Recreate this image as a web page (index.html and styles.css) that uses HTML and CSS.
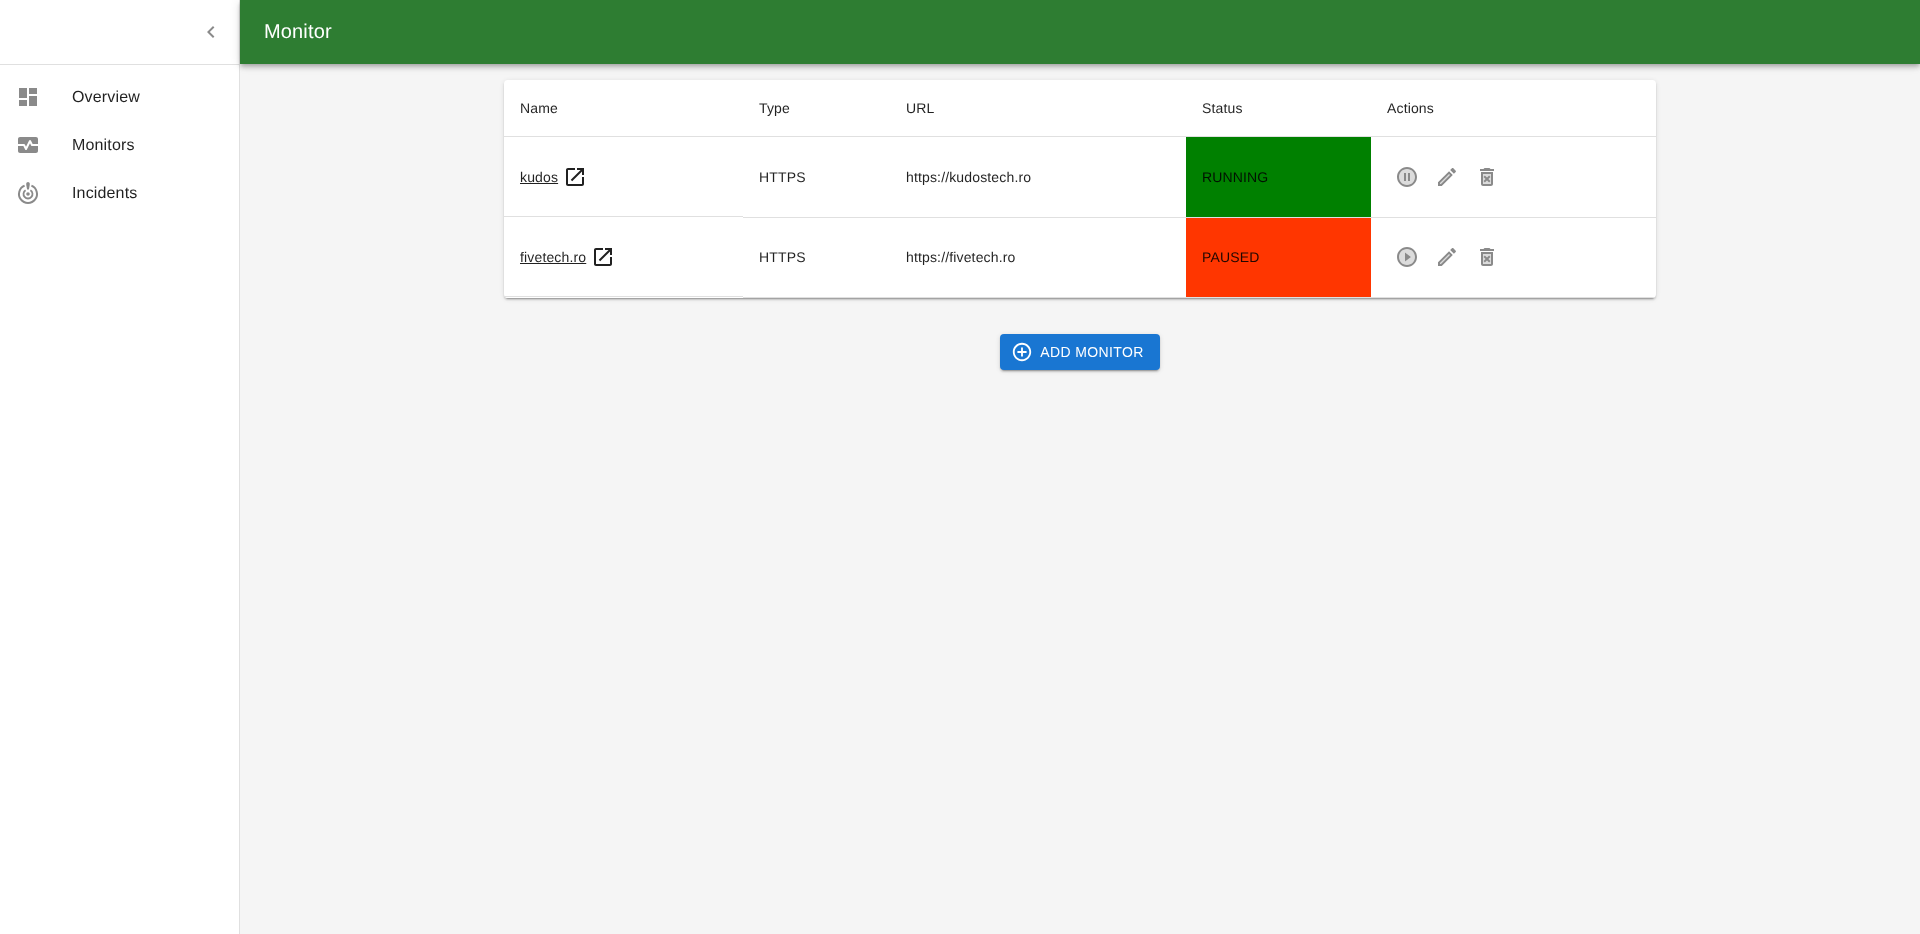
FILE: index.html
```html
<!DOCTYPE html>
<html>
  <head>
    <meta name="viewport" content="width=device-width, initial-scale=1.0" />
    <title>Monitor</title>
    <link rel="stylesheet" href="styles.css">
  </head>
  <body>
    <aside class="sidebar">
      <div class="sidebar-top">
        <button class="icon-btn" type="button" aria-label="Collapse">
          <svg class="icon" viewBox="0 0 24 24"><path d="M15.41 7.41 14 6l-6 6 6 6 1.41-1.41L10.83 12z"/></svg>
        </button>
      </div>
      <nav class="nav">
        <a class="nav-item" href="#">
          <svg class="icon" viewBox="0 0 24 24"><path d="M3 13h8V3H3v10zm0 8h8v-6H3v6zm10 0h8V11h-8v10zm0-18v6h8V3h-8z"/></svg>
          <span>Overview</span>
        </a>
        <a class="nav-item" href="#">
          <svg class="icon" viewBox="0 0 24 24"><path d="M15.11 12.45 14 10.24l-3.11 6.21c-.16.34-.51.55-.89.55s-.73-.21-.89-.55L7.38 13H2v5c0 1.1.9 2 2 2h16c1.1 0 2-.9 2-2v-5h-6c-.38 0-.73-.21-.89-.55z"/><path d="M20 4H4c-1.1 0-2 .9-2 2v5h6c.38 0 .73.21.89.55L10 13.76l3.11-6.21c.34-.68 1.45-.68 1.79 0L16.62 11H22V6c0-1.1-.9-2-2-2z"/></svg>
          <span>Monitors</span>
        </a>
        <a class="nav-item" href="#">
          <svg class="icon" viewBox="0 0 24 24">
            <path d="M13.800 3c0 1.300-.9 5.500-.9 5.500h-1.800S10.200 4.300 10.200 3c0-1.100.8-2 1.800-2s1.800.9 1.800 2z"/>
            <circle cx="12" cy="13" r="1.800"/>
            <path class="ring" d="M8.600 4.670a9 9 0 1 0 6.800 0"/>
            <path class="ring ring-inner" d="M9.600 9.200a4.500 4.500 0 1 0 4.800 0"/>
          </svg>
          <span>Incidents</span>
        </a>
      </nav>
    </aside>

    <div class="content">
      <header class="topbar">Monitor</header>
      <main class="main">
        <div class="paper">
          <table class="monitors">
            <thead>
              <tr>
                <th class="col-name">Name</th>
                <th class="col-type">Type</th>
                <th class="col-url">URL</th>
                <th class="col-status">Status</th>
                <th>Actions</th>
              </tr>
            </thead>
            <tbody>
              <tr class="row-tall">
                <td class="name-cell">
                  <span class="name-wrap">
                    <a href="#">kudos</a>
                    <svg class="icon icon-dark" viewBox="0 0 24 24"><path d="M19 19H5V5h7V3H5c-1.110 0-2 .9-2 2v14c0 1.100.89 2 2 2h14c1.100 0 2-.9 2-2v-7h-2v7zM14 3v2h3.590l-9.830 9.830 1.410 1.410L19 6.410V10h2V3h-7z"/></svg>
                  </span>
                </td>
                <td>HTTPS</td>
                <td>https://kudostech.ro</td>
                <td class="running">RUNNING</td>
                <td>
                  <div class="actions">
                    <button class="icon-btn" type="button" aria-label="Pause">
                      <svg class="icon" viewBox="0 0 24 24"><path opacity=".3" d="M12 4c-4.410 0-8 3.590-8 8s3.590 8 8 8 8-3.590 8-8-3.590-8-8-8zm-1 12H9V8h2v8zm4 0h-2V8h2v8z"/><path d="M13 8h2v8h-2zM9 8h2v8H9zm3-6C6.480 2 2 6.480 2 12s4.480 10 10 10 10-4.480 10-10S17.520 2 12 2zm0 18c-4.410 0-8-3.590-8-8s3.590-8 8-8 8 3.590 8 8-3.590 8-8 8z"/></svg>
                    </button>
                    <button class="icon-btn" type="button" aria-label="Edit">
                      <svg class="icon" viewBox="0 0 24 24"><path opacity=".3" d="M5 18.080V19h.92l9.060-9.060-.92-.92z"/><path d="M20.710 7.040c.39-.39.39-1.020 0-1.410l-2.340-2.340C18.170 3.090 17.920 3 17.660 3s-.51.1-.7.29l-1.830 1.830 3.750 3.750 1.830-1.830zM3 17.250V21h3.750L17.810 9.940l-3.750-3.750L3 17.250zM5.920 19H5v-.92l9.060-9.060.92.92L5.920 19z"/></svg>
                    </button>
                    <button class="icon-btn" type="button" aria-label="Delete">
                      <svg class="icon" viewBox="0 0 24 24"><path opacity=".3" d="M16 9H8v10h8V9zm-.47 7.120-1.410 1.410L12 15.410l-2.120 2.120-1.410-1.410L10.590 14l-2.130-2.120 1.410-1.410L12 12.590l2.120-2.120 1.410 1.410L13.410 14l2.120 2.120z"/><path d="M14.120 10.470 12 12.590l-2.130-2.120-1.410 1.410L10.590 14l-2.120 2.120 1.410 1.410L12 15.410l2.120 2.120 1.410-1.410L13.410 14l2.120-2.120zM15.500 4l-1-1h-5l-1 1H5v2h14V4zM6 19c0 1.100.9 2 2 2h8c1.100 0 2-.9 2-2V7H6v12zM8 9h8v10H8V9z"/></svg>
                    </button>
                  </div>
                </td>
              </tr>
              <tr class="row-last">
                <td class="name-cell">
                  <span class="name-wrap">
                    <a href="#">fivetech.ro</a>
                    <svg class="icon icon-dark" viewBox="0 0 24 24"><path d="M19 19H5V5h7V3H5c-1.110 0-2 .9-2 2v14c0 1.100.89 2 2 2h14c1.100 0 2-.9 2-2v-7h-2v7zM14 3v2h3.590l-9.830 9.830 1.410 1.410L19 6.410V10h2V3h-7z"/></svg>
                  </span>
                </td>
                <td>HTTPS</td>
                <td>https://fivetech.ro</td>
                <td class="paused">PAUSED</td>
                <td>
                  <div class="actions">
                    <button class="icon-btn" type="button" aria-label="Start">
                      <svg class="icon" viewBox="0 0 24 24"><path opacity=".3" d="M12 20c4.410 0 8-3.590 8-8s-3.590-8-8-8-8 3.590-8 8 3.590 8 8 8zM10 7.500l6 4.500-6 4.500v-9z"/><path d="M12 22c5.520 0 10-4.480 10-10S17.520 2 12 2 2 6.480 2 12s4.480 10 10 10zm0-18c4.410 0 8 3.590 8 8s-3.590 8-8 8-8-3.590-8-8 3.590-8 8-8zm-2 3.500v9l6-4.500z"/></svg>
                    </button>
                    <button class="icon-btn" type="button" aria-label="Edit">
                      <svg class="icon" viewBox="0 0 24 24"><path opacity=".3" d="M5 18.080V19h.92l9.060-9.060-.92-.92z"/><path d="M20.710 7.040c.39-.39.39-1.020 0-1.410l-2.340-2.340C18.170 3.090 17.920 3 17.660 3s-.51.1-.7.29l-1.830 1.830 3.750 3.750 1.830-1.830zM3 17.250V21h3.750L17.810 9.940l-3.750-3.750L3 17.250zM5.920 19H5v-.92l9.060-9.060.92.92L5.920 19z"/></svg>
                    </button>
                    <button class="icon-btn" type="button" aria-label="Delete">
                      <svg class="icon" viewBox="0 0 24 24"><path opacity=".3" d="M16 9H8v10h8V9zm-.47 7.120-1.410 1.410L12 15.410l-2.120 2.120-1.410-1.410L10.590 14l-2.130-2.120 1.410-1.410L12 12.590l2.120-2.120 1.410 1.410L13.410 14l2.120 2.120z"/><path d="M14.120 10.470 12 12.590l-2.130-2.120-1.410 1.410L10.590 14l-2.120 2.120 1.410 1.410L12 15.410l2.120 2.120 1.410-1.410L13.410 14l2.120-2.120zM15.500 4l-1-1h-5l-1 1H5v2h14V4zM6 19c0 1.100.9 2 2 2h8c1.100 0 2-.9 2-2V7H6v12zM8 9h8v10H8V9z"/></svg>
                    </button>
                  </div>
                </td>
              </tr>
            </tbody>
          </table>
        </div>
        <button class="add-btn" type="button">
          <svg class="add-icon" viewBox="0 0 24 24"><path d="M13 7h-2v4H7v2h4v4h2v-4h4v-2h-4V7zm-1-5C6.480 2 2 6.480 2 12s4.480 10 10 10 10-4.480 10-10S17.520 2 12 2zm0 18c-4.410 0-8-3.590-8-8s3.590-8 8-8 8 3.590 8 8-3.590 8-8 8z"/></svg>
          Add monitor
        </button>
      </main>
    </div>
  </body>
</html>
```

FILE: styles.css
```css
* {
  margin: 0;
  padding: 0;
  box-sizing: border-box;
}

body {
  display: flex;
  height: 100vh;
  overflow: hidden;
  background-color: #f5f5f5;
  color: rgba(0, 0, 0, 0.87);
  font-family: "Liberation Sans", Arial, sans-serif;
  text-rendering: geometricPrecision;
}

.icon {
  display: block;
  width: 24px;
  height: 24px;
  fill: rgba(0, 0, 0, 0.46);
}

.icon-dark {
  flex-shrink: 0;
  fill: rgba(0, 0, 0, 0.87);
}

.ring {
  fill: none;
  stroke: rgba(0, 0, 0, 0.46);
  stroke-width: 2;
}

.ring-inner {
  stroke-width: 1.8;
}

.icon-btn {
  display: flex;
  padding: 8px;
  border: 0;
  border-radius: 50%;
  background: none;
  cursor: pointer;
}

/* sidebar */
.sidebar {
  flex: 0 0 240px;
  background-color: #fff;
  border-right: 1px solid #e0e0e0;
  will-change: transform;
}

.sidebar-top {
  display: flex;
  align-items: center;
  justify-content: flex-end;
  height: 65px;
  padding: 0 8px;
  border-bottom: 1px solid #e0e0e0;
}

.nav {
  padding: 8px 0;
}

.nav-item {
  display: flex;
  align-items: center;
  height: 48px;
  padding: 0 16px;
  color: rgba(0, 0, 0, 0.87);
  font-size: 16px;
  letter-spacing: 0.00938em;
  text-decoration: none;
}

.nav-item .icon {
  margin-right: 32px;
}

.nav-item span {
  padding-top: 2px;
}

/* main area */
.content {
  flex: 1;
  min-width: 0;
  will-change: transform;
}

.topbar {
  display: flex;
  align-items: center;
  height: 64px;
  padding: 0 24px;
  background-color: #2e7d32;
  box-shadow: 0 2px 4px -1px rgba(0, 0, 0, 0.2), 0 4px 5px 0 rgba(0, 0, 0, 0.14), 0 1px 10px 0 rgba(0, 0, 0, 0.12);
  color: #fff;
  font-size: 20px;
  letter-spacing: 0.0075em;
}

.main {
  display: flex;
  flex-direction: column;
  align-items: center;
  padding-top: 16px;
}

.paper {
  width: 1152px;
  overflow: hidden;
  border-radius: 4px;
  background-color: #fff;
  box-shadow: 0 3px 1px -2px rgba(0, 0, 0, 0.2), 0 2px 2px 0 rgba(0, 0, 0, 0.14), 0 1px 5px 0 rgba(0, 0, 0, 0.12);
}

/* table */
.monitors {
  width: 100%;
  table-layout: fixed;
  border-collapse: separate;
  border-spacing: 0;
  font-size: 14px;
  letter-spacing: 0.01071em;
}

.monitors th,
.monitors td {
  padding: 0 16px;
  border-bottom: 1px solid #e0e0e0;
  text-align: left;
  font-weight: 400;
}

.monitors th {
  height: 57px;
}

.monitors td {
  height: 80px;
}

.monitors .row-tall td {
  height: 81px;
}

.monitors .row-last td {
  padding-bottom: 1px;
}

.col-name {
  width: 239px;
}

.col-type {
  width: 147px;
}

.col-url {
  width: 296px;
}

.col-status {
  width: 185px;
}

/* the name column's rule sits a pixel above the others */
.monitors .name-cell {
  border-bottom-color: #fff;
  box-shadow: inset 0 -1px 0 #e0e0e0;
}

.name-wrap {
  display: flex;
  align-items: center;
}

.name-wrap a {
  margin-right: 5px;
  color: rgba(0, 0, 0, 0.87);
}

.running {
  background-color: #008000;
}

.paused {
  background-color: #ff3600;
}

.actions {
  display: flex;
}

/* button */
.add-btn {
  display: flex;
  align-items: center;
  height: 36px;
  margin-top: 36px;
  padding: 0 16px 0 12px;
  border: 0;
  border-radius: 4px;
  background-color: #1976d2;
  box-shadow: 0 3px 1px -2px rgba(0, 0, 0, 0.2), 0 2px 2px 0 rgba(0, 0, 0, 0.14), 0 1px 5px 0 rgba(0, 0, 0, 0.12);
  color: #fff;
  font-family: inherit;
  font-size: 14px;
  letter-spacing: 0.02857em;
  text-transform: uppercase;
  cursor: pointer;
}

.add-icon {
  width: 22px;
  height: 22px;
  margin: 0 7px 0 -1px;
  fill: #fff;
}
```
